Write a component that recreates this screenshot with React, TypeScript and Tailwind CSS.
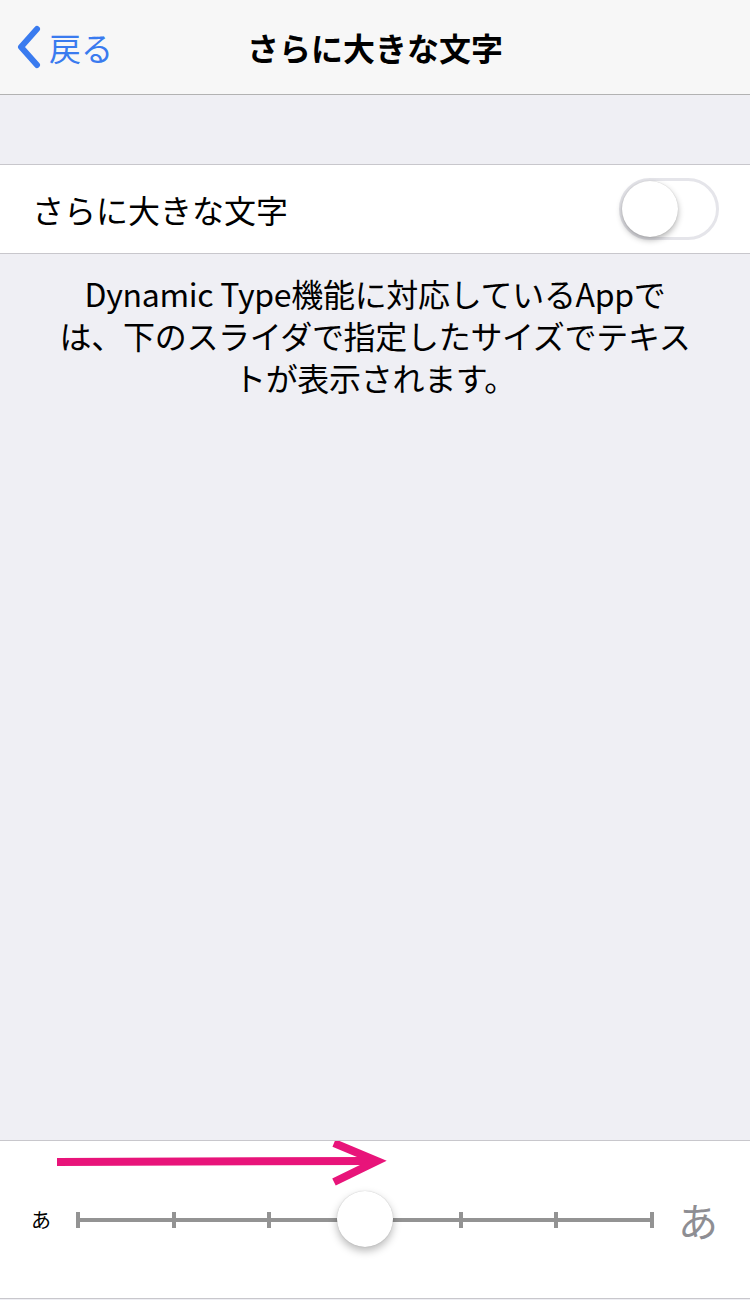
import React from "react";

const font = { fontFamily: '"Noto Sans CJK JP", "Noto Sans", sans-serif' };

function Toggle() {
  return (
    <div className="relative w-[100px] h-[62px] rounded-full border-[3px] border-[#e5e5ea] bg-white">
      <div className="absolute left-0 top-0 w-[56px] h-[56px] rounded-full bg-white shadow-[0_3px_6px_rgba(0,0,0,0.3),0_0_1px_rgba(0,0,0,0.2)]" />
    </div>
  );
}

function Slider() {
  const ticks = [0, 1, 2, 3, 4, 5, 6];
  return (
    <div className="relative flex-1 h-[60px] flex items-center">
      <div className="relative w-full h-[4px] bg-[#939393]">
        {ticks.map((t) => (
          <div
            key={t}
            className="absolute top-[-6px] w-[4px] h-[16px] bg-[#939393]"
            style={{ left: `calc(${(t / 6) * 100}% - 2px)` }}
          />
        ))}
        <div
          className="absolute top-[-27px] w-[56px] h-[56px] rounded-full bg-white shadow-[0_4px_8px_rgba(0,0,0,0.28),0_0_1px_rgba(0,0,0,0.25)]"
          style={{ left: "calc(50% - 28px)" }}
        />
      </div>
    </div>
  );
}

export default function App() {
  return (
    <div className="w-[750px] h-[1300px] bg-[#efeff4] flex flex-col overflow-hidden" style={font}>
      {/* Nav bar */}
      <header className="relative h-[95px] shrink-0 bg-[#f7f7f7] border-b border-[#b2b2b2] flex items-center">
        <div className="flex items-center pl-[16px] text-[#3a7bef]">
          <svg width="26" height="44" viewBox="0 0 26 44" fill="none">
            <path d="M21 4 L5 22 L21 40" stroke="#3a7bef" strokeWidth="6" strokeLinecap="round" strokeLinejoin="round" />
          </svg>
          <span className="ml-[7px] text-[32px] leading-none">戻る</span>
        </div>
        <h1 className="absolute left-0 right-0 text-center text-[32px] font-bold text-black leading-none pointer-events-none">
          さらに大きな文字
        </h1>
      </header>

      <div className="h-[69px] shrink-0" />

      {/* Toggle row */}
      <div className="h-[90px] shrink-0 bg-white border-y border-[#c8c7cc] flex items-center justify-between pl-[32px] pr-[31px]">
        <span className="text-[32px] text-black">さらに大きな文字</span>
        <Toggle />
      </div>

      <p className="pt-[18px] px-[30px] text-center text-[32px] leading-[42px] text-black tracking-[-0.3px]">
        Dynamic Type機能に対応しているAppで
        <br />
        は、下のスライダで指定したサイズでテキス
        <br />
        トが表示されます。
      </p>

      <div className="flex-1" />

      {/* Slider panel */}
      <div className="relative h-[159px] shrink-0 mb-[1px] bg-white border-y border-[#c8c7cc] flex items-center pt-[0px] pl-[31px] pr-[32px]">
        <span className="text-[20px] text-black w-[47px]">あ</span>
        <Slider />
        <span className="text-[40px] text-[#8e8e93] ml-[26px] leading-none">あ</span>

        {/* Annotation arrow */}
        <svg className="absolute left-0 top-0" width="750" height="159" viewBox="0 0 750 159" fill="none">
          <line x1="57" y1="21" x2="370" y2="20" stroke="#e8147a" strokeWidth="8" />
          <path d="M334 2 L377 20 L334 41" stroke="#e8147a" strokeWidth="8" />
        </svg>
      </div>
    </div>
  );
}
